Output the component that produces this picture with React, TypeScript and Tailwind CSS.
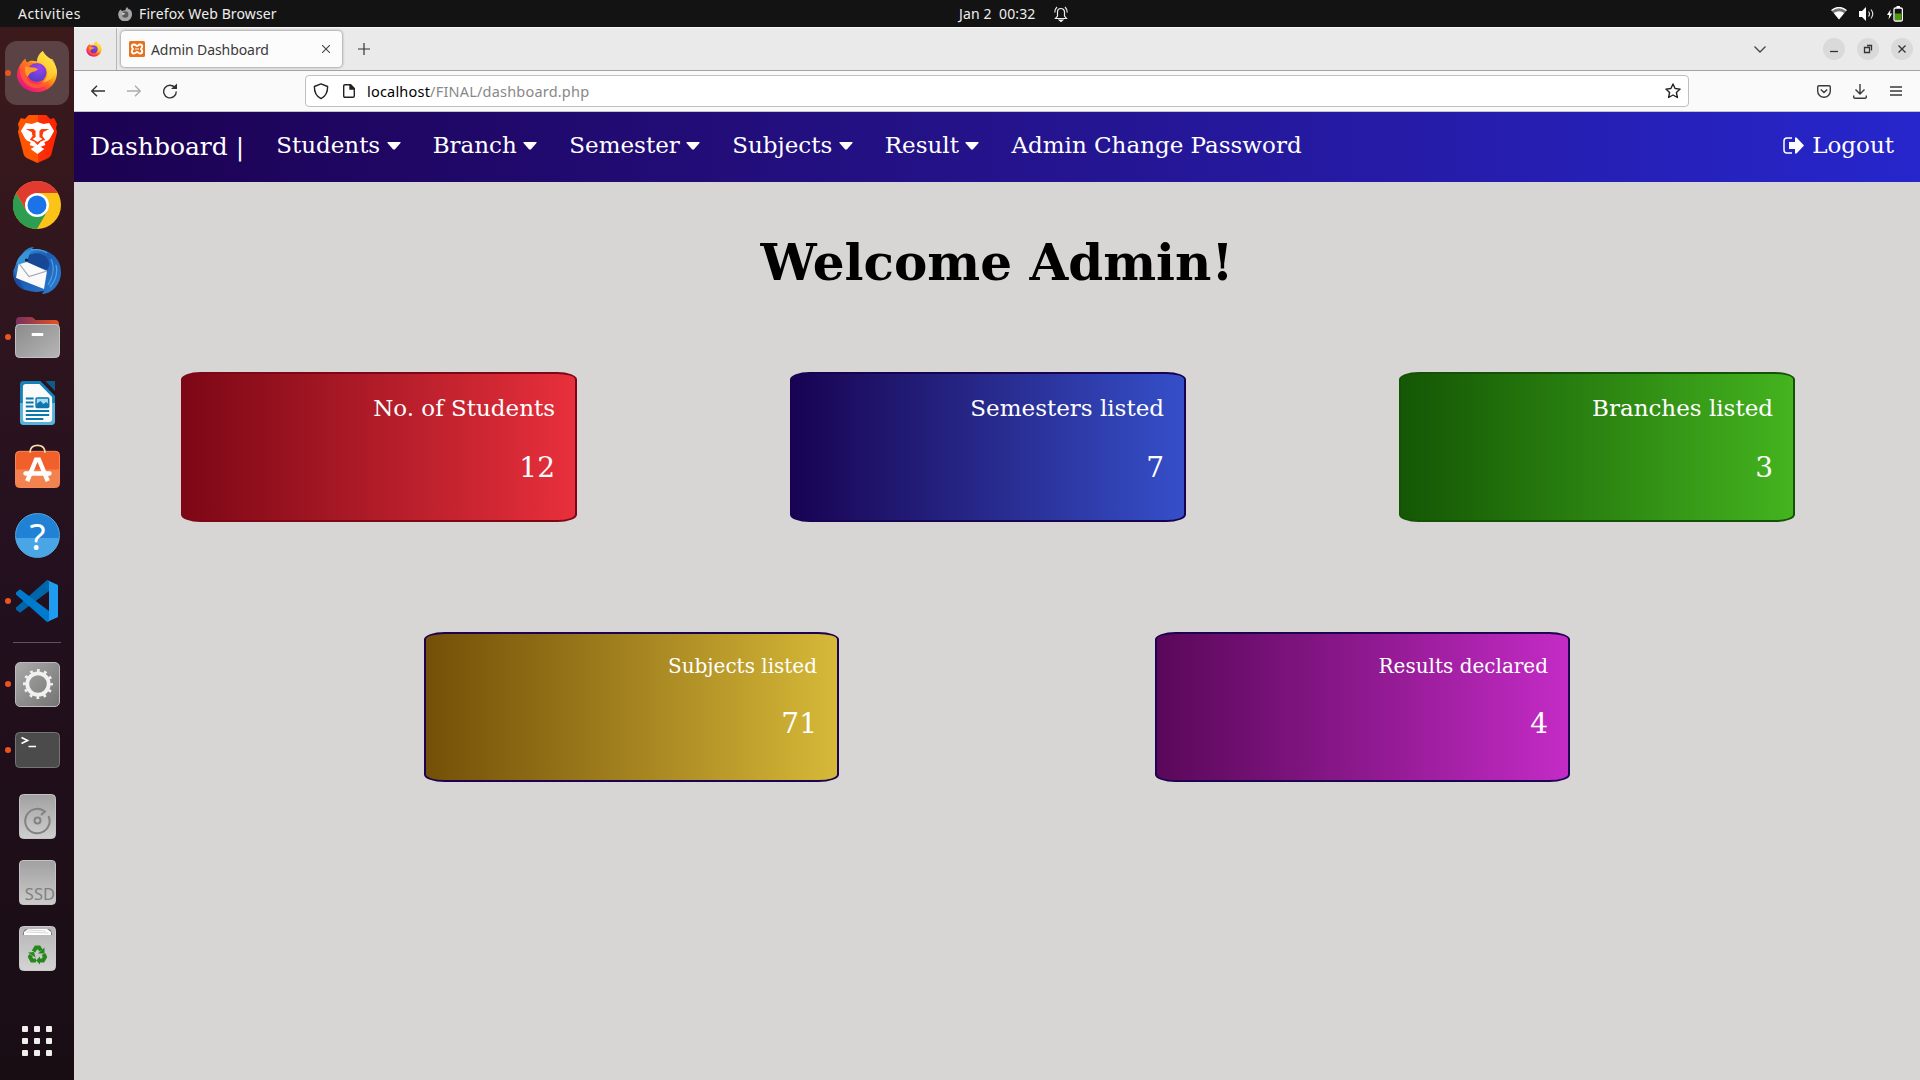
import React from "react";

type CardData = { label: string; value: string; tone: string };

const topCards: CardData[] = [
  { label: "No. of Students", value: "12", tone: "border-[#7d0716] from-[#7d0716] to-[#e8303c]" },
  { label: "Semesters listed", value: "7", tone: "border-[#180353] from-[#180353] to-[#354fc9]" },
  { label: "Branches listed", value: "3", tone: "border-[#145205] from-[#145705] to-[#44b41f]" },
];

const bottomCards: CardData[] = [
  { label: "Subjects listed", value: "71", tone: "from-[#735007] to-[#d6b938]" },
  { label: "Results declared", value: "4", tone: "from-[#5a085a] to-[#c42bc6]" },
];

function Dock() {
  const items: { icon: React.ReactNode; dot?: boolean; active?: boolean }[] = [
    { icon: <FirefoxIcon id="dock" className="mb-[2px] h-[44px] w-[42px]" />, dot: true, active: true },
    { icon: <BraveIcon /> },
    { icon: <ChromeIcon /> },
    { icon: <ThunderbirdIcon /> },
    { icon: <FilesIcon />, dot: true },
    { icon: <WriterIcon /> },
    { icon: <SoftwareIcon /> },
    { icon: <HelpIcon /> },
    { icon: <CodeIcon />, dot: true },
  ];
  const lower: { icon: React.ReactNode; dot?: boolean }[] = [
    { icon: <SettingsIcon />, dot: true },
    { icon: <TerminalIcon />, dot: true },
    { icon: <DiskIcon /> },
    { icon: <SsdIcon /> },
    { icon: <TrashIcon /> },
  ];
  return (
    <aside className="flex w-[74px] shrink-0 flex-col items-center bg-linear-to-b from-[#3c1a1b] via-[#24101f] via-50% to-[#190d14] pt-[14px]">
      {items.map((it, i) => (
        <DockItem key={i} {...it} />
      ))}
      <div className="mt-[7px] mb-[9px] h-px w-12 shrink-0 bg-[#61525f]" />
      {lower.map((it, i) => (
        <DockItem key={i} {...it} />
      ))}
      <div className="mt-[44px] grid grid-cols-3 gap-[6px]">
        {Array.from({ length: 9 }, (_, i) => (
          <span key={i} className="size-[6px] rounded-[1px] bg-[#f1efee]" />
        ))}
      </div>
    </aside>
  );
}

function DockItem({ icon, dot, active }: { icon: React.ReactNode; dot?: boolean; active?: boolean }) {
  return (
    <div className="flex h-[66px] w-[74px] shrink-0 items-start pl-[5px]">
      <div className={`relative flex size-16 items-center justify-center rounded-xl ${active ? "bg-[#5b4244]" : ""}`}>
        {dot && <span className="absolute top-[29px] left-0 size-[6px] rounded-full bg-[#e95420]" />}
        {icon}
      </div>
    </div>
  );
}

function FirefoxIcon({ id, className }: { id: string; className: string }) {
  return (
    <svg viewBox="0 0 44 44" className={className}>
      <defs>
        <linearGradient id={`${id}-a`} x1="0.85" y1="0.1" x2="0.2" y2="0.95">
          <stop offset="0.1" stopColor="#fff44f" />
          <stop offset="0.45" stopColor="#ff980e" />
          <stop offset="0.7" stopColor="#ff3647" />
          <stop offset="1" stopColor="#e31587" />
        </linearGradient>
        <radialGradient id={`${id}-b`} cx="0.6" cy="0.25" r="0.8">
          <stop offset="0" stopColor="#a040f0" />
          <stop offset="1" stopColor="#4a3fc4" />
        </radialGradient>
      </defs>
      <path d="M28 0c-4 3-6 7-6 11-4-1-7-1-10 1-2-1-2-3-2-4-2 1-4 4-5 6-3 4-4 8-4 12 1 10 10 17 21 17 12 0 21-9 21-21 0-4-2-8-5-12 0-1-1-2-2-2-3-2-6-4-8-8z" fill={`url(#${id}-a)`} />
      <path d="M4 15c2-3 4-5 6-7 0 2 1 3 2 4 4-1 7 0 10 3l-3 2-6 2-2 6c0 6 5 10 11 10 7 0 12-4 12-10 3 8-4 14-12 14S3 33 4 15z" fill="#ff6a28" opacity="0.65" />
      <circle cx="22" cy="22.500" r="10" fill={`url(#${id}-b)`} />
      <path d="M10 16c4 2 9 0 13 3-3 3-5 2-8 4l-3 4c-3-3-3-8-2-11z" fill="#ff9a24" />
      <path d="M28 0c-4 3-6 7-6 11 6 1 12 6 11 14-1 4-3 6-5 8 7-1 13-6 14-13 0-5-2-9-4-12l-2 1c-3-2-6-5-8-9z" fill="#ffd43b" opacity="0.7" />
    </svg>
  );
}

function BraveIcon() {
  return (
    <svg viewBox="0 0 42 48" preserveAspectRatio="none" className="ml-px h-[48px] w-[41px]">
      <defs>
        <linearGradient id="brave" x1="0" x2="1">
          <stop offset="0.5" stopColor="#ff5500" />
          <stop offset="0.52" stopColor="#fb3209" />
          <stop offset="1" stopColor="#ff2000" />
        </linearGradient>
      </defs>
      <path d="M12 0h18l4 4 4-1 3 6-1 4 1 4-6 23c-1 2-3 3-5 4l-9 4-9-4c-2-1-4-2-5-4L1 17l1-4-1-4 3-6 4 1z" fill="url(#brave)" />
      <path d="M9 8l6 1 6-2 6 2 6-1 5 8-4 7c-1 2-3 3-6 4l1 3-8 3-8-3 1-3c-3-1-5-2-6-4l-4-7z" fill="#fff" />
      <path d="M9 14l8 0 2 2v6l-3 2 5 3 5-3-3-2v-6l2-2 8 0-6 3-1 4 3 4c-3 1-5 1-6 3l-2 2-2-2c-1-2-3-2-6-3l3-4-1-4z" fill="#ff3b08" />
      <path d="M21 30l7 4-7 5-7-5z" fill="#fff" />
    </svg>
  );
}

function ChromeIcon() {
  return (
    <svg viewBox="0 0 48 48" className="size-12">
      <circle cx="24" cy="24" r="24" fill="#fcc319" />
      <path d="M24 24L3.2 12A24 24 0 0 1 44.8 12H24z" fill="#e13b2f" />
      <path d="M3.2 12A24 24 0 0 0 24 48L34.4 30 24 24 13.6 30z" fill="#2d9e4f" />
      <path d="M3.2 12L13.6 30 24 12z" fill="#e13b2f" />
      <circle cx="24" cy="24" r="12" fill="#fff" />
      <circle cx="24" cy="24" r="9.5" fill="#1a73e8" />
    </svg>
  );
}

function ThunderbirdIcon() {
  return (
    <svg viewBox="0 0 48 48" className="size-12">
      <defs>
        <linearGradient id="bird" x1="0" y1="0" x2="1" y2="1">
          <stop offset="0" stopColor="#3aa0e0" />
          <stop offset="0.45" stopColor="#1d5cb4" />
          <stop offset="1" stopColor="#2f80d2" />
        </linearGradient>
      </defs>
      <path d="M4 17C8 6 14 0 21 0l-2 2c16-1 29 8 29 23 0 13-10 22-19 22l2-3-7 1c-4 0-7-1-12-2C5 41 0 34 0 25l3-8z" fill="url(#bird)" />
      <path d="M16 8c9-4 16-1 19 5 2 4 1 7-1 10l-14-5-9-3c1-3 2-5 5-7z" fill="#184796" />
      <path d="M6 15l8 0 20 9-3 18L3 31z" fill="#fafafa" />
      <path d="M6 16.500l10 13 18-5.500" fill="none" stroke="#a4a7b0" strokeWidth="1.200" />
      <path d="M3 17C5 9 11 4 20 3c-5 3-4 8-6 12l-7 2z" fill="#3a94d9" />
      <path d="M0 22C0 34 5 41 12 43c-3-3-5-6-5-10l-4-2z" fill="#1c4da0" />
      <circle cx="13.500" cy="13" r="1.600" fill="#123" />
      <path d="M38 12c4 8 2 18-3 26M43 18c2 8-1 16-6 22M18 3c6-1 12 0 16 3" fill="none" stroke="#48a5e6" strokeWidth="1.300" />
    </svg>
  );
}

function FilesIcon() {
  return (
    <svg viewBox="0 0 46 42" preserveAspectRatio="none" className="ml-px h-[42px] w-[45px]">
      <defs>
        <linearGradient id="folder"><stop stopColor="#75305c" /><stop offset="1" stopColor="#e85420" /></linearGradient>
        <linearGradient id="drawer" x2="1" y2="1"><stop stopColor="#8b8b8b" /><stop offset="1" stopColor="#b6b6b6" /></linearGradient>
      </defs>
      <path d="M1 5q0-4 4-4h11q3 0 5 3h20q4 0 4 4v14H1z" fill="url(#folder)" />
      <rect x="0.500" y="8.500" width="45" height="33" rx="4" fill="url(#drawer)" stroke="#c3c3c3" />
      <rect x="17" y="17" width="12" height="3" rx="1" fill="#fff" />
    </svg>
  );
}

function WriterIcon() {
  return (
    <svg viewBox="0 0 38 46" preserveAspectRatio="none" className="ml-px h-[46px] w-[37px]">
      <path d="M4 1h18l15 15v25q0 4-4 4H5q-4 0-4-4V5q0-4 3-4z" fill="#1482ba" />
      <path d="M1 23h36v18q0 4-4 4H5q-4 0-4-4z" fill="#55b2dc" />
      <path d="M7 4h14l13 13v22q0 3-3 3H7q-3 0-3-3V7q0-3 3-3z" fill="#fafafa" />
      <path d="M27 1h10v10z" fill="#0f5b8a" />
      <path d="M7 18.500h8M7 22.500h8M7 26.500h8M7 31h24M7 35h24M7 39h18" stroke="#0c76b0" strokeWidth="2" />
      <rect x="17.500" y="18" width="13" height="9.500" rx="1" fill="#a8daf2" stroke="#0c76b0" strokeWidth="1.500" />
      <path d="M18 27v-3l4-3 3 3 3-2 3 3v2z" fill="#0c76b0" />
    </svg>
  );
}

function SoftwareIcon() {
  return (
    <svg viewBox="0 0 46 46" className="mb-[7px] ml-px h-[45px] w-[45px]">
      <rect x="0.500" y="8.500" width="45" height="37" rx="4" fill="#f15f2a" stroke="#f58b5f" />
      <path d="M1 27h44v14q0 4-4 4H5q-4 0-4-4z" fill="#f4824f" />
      <path d="M15.500 10V8q1-5.500 7.500-5.500t7.500 5.500v2" fill="none" stroke="#f8dca6" strokeWidth="1.700" />
      <path d="M12.500 39L21.500 17h3l9 22" fill="none" stroke="#fff" strokeWidth="4.500" />
      <rect x="8.500" y="29" width="29" height="4.500" rx="2.200" fill="#fff" />
    </svg>
  );
}

function HelpIcon() {
  return (
    <div className="ml-px flex size-[45px] items-center justify-center rounded-full border border-[#55a9e2] bg-linear-to-b from-[#2181d5] from-55% to-[#49a5e5] to-55% font-['Noto_Sans',sans-serif] text-[37px] leading-none text-white">
      ?
    </div>
  );
}

function CodeIcon() {
  return (
    <svg viewBox="0 0 42 42" className="size-[42px]">
      <path d="M0 27.500q-1 1 0 2l3 2.500q1 1 2 0L33 11V1L31 0z" fill="#0065a9" />
      <path d="M0 14.500q-1-1 0-2l3-2.500q1-1 2 0L33 31v10l-2 1z" fill="#007acc" />
      <path d="M31 0l11 5v32l-11 5q2-1 2-3V3q0-2-2-3z" fill="#1f9cf0" />
    </svg>
  );
}

function SettingsIcon() {
  return (
    <div className="ml-px flex size-[45px] items-center justify-center rounded-[5px] border border-[#bbb] bg-linear-to-br from-[#aaa] to-[#747474]">
      <svg viewBox="0 0 30 30" className="size-[30px]">
        <circle cx="15" cy="15" r="13.500" fill="none" stroke="#f3f1ef" strokeWidth="3" strokeDasharray="2.800 4.269" strokeDashoffset="1.400" />
        <circle cx="15" cy="15" r="10.700" fill="none" stroke="#f3f1ef" strokeWidth="3.800" />
      </svg>
    </div>
  );
}

function TerminalIcon() {
  return (
    <svg viewBox="0 0 45 36" className="ml-px h-[36px] w-[45px]">
      <rect x="0.500" y="0.500" width="44" height="35" rx="4" fill="#4b4b4b" stroke="#757575" />
      <path d="M6.500 5.500l6 3-6 3M13.500 14.500h7.500" fill="none" stroke="#fff" strokeWidth="1.700" />
    </svg>
  );
}

function DiskIcon() {
  return (
    <svg viewBox="0 0 37 45" className="ml-px h-[45px] w-[37px]">
      <defs><linearGradient id="disk" x2="0" y2="1"><stop stopColor="#a1a1a1" /><stop offset="1" stopColor="#cfcfcf" /></linearGradient></defs>
      <rect x="0.500" y="0.500" width="36" height="44" rx="4" fill="url(#disk)" stroke="#c3c3c3" />
      <path d="M29.500 22A12.200 12.200 0 1 1 26 17.500L22 21" fill="none" stroke="#828282" strokeWidth="2" />
      <circle cx="18.500" cy="26.500" r="3" fill="none" stroke="#828282" strokeWidth="2" />
    </svg>
  );
}

function SsdIcon() {
  return (
    <div className="ml-px flex h-[45px] w-[37px] items-end justify-end rounded-[4px] border border-[#c3c3c3] bg-linear-to-b from-[#a1a1a1] to-[#cbcbcb] font-['Noto_Sans',sans-serif] text-[16.500px] leading-[20px] text-[#808080]">
      SSD
    </div>
  );
}

function TrashIcon() {
  return (
    <svg viewBox="0 0 37 45" className="ml-px h-[45px] w-[37px]">
      <defs><linearGradient id="trash" x2="0" y2="1"><stop stopColor="#b5b5b5" /><stop offset="1" stopColor="#d4d4d4" /></linearGradient></defs>
      <rect x="0.500" y="0.500" width="36" height="44" rx="4" fill="url(#trash)" stroke="#c9c9c9" />
      <path d="M4 9q0-6 4-6h21q4 0 4 6z" fill="#777" />
      <path d="M5 9V6l4-3h19l4 3v3z" fill="#fff" />
      <path d="M7 6l22 1M9 4l18 1" stroke="#ccc" strokeWidth="0.800" />
      <g fill="none" stroke="#26881b" strokeWidth="4">
        <path d="M14.500 25.500L17 21.500h3l2 3" />
        <path d="M24.500 28l1.500 3-2 3.500h-3" />
        <path d="M17 34.500h-4L11 31l1-2" />
      </g>
      <path d="M25.500 21.500v6h-6.500zM21 30.500v8l-4-4zM9 26.500l6-.5 1.500 5.500z" fill="#26881b" />
    </svg>
  );
}

function BellIcon() {
  return (
    <svg viewBox="0 0 14 16" className="h-4 w-3.5" fill="none" stroke="#eee" strokeWidth="1.200">
      <path d="M1.500 12.500h11l-2-2.500V6a3.500 3.500 0 0 0-7 0v4zM3 1Q.8 3 .8 6.500M11 1q2.200 2 2.200 5.500" />
      <path d="M5.300 14h3.400L7 15.500z" fill="#eee" />
    </svg>
  );
}

function TopBar() {
  return (
    <header className="flex h-[27px] shrink-0 items-center bg-[#131313] font-['Noto_Sans',sans-serif] text-[14px] text-[#eee]">
      <span className="ml-[18px] w-[100px] tracking-[0.45px]">Activities</span>
      <svg viewBox="0 0 14 14" className="size-[14px]">
        <path d="M9 0c-1 1-1.500 2-1.500 3L4 4 2.500 2.500C1 4 0 6 .2 8A6.800 6.800 0 0 0 14 7c0-3-1.500-4.500-3.500-5z" fill="#a5a5a5" />
        <circle cx="7.200" cy="7.500" r="3.200" fill="#5a5a5a" />
        <path d="M3.500 5.500l4 1-3 2z" fill="#ccc" />
      </svg>
      <span className="ml-[7px] w-[820px] tracking-[0.12px]">Firefox Web Browser</span>
      <span className="w-[95px] tracking-[0.12px] whitespace-pre">Jan 2  00:32</span>
      <BellIcon />
      <div className="ml-auto flex items-center pr-[17px]">
        <svg viewBox="0 0 16 13" className="mr-[12px] h-[13px] w-4">
          <path d="M.3 3.500Q8-2.800 15.700 3.500L8 12.500z" fill="#777" />
          <path d="M2.800 6Q8 2.400 13.200 6L8 12.500z" fill="#fff" />
          <path d="M.5 3.500Q8-2.500 15.500 3.500" stroke="#fff" strokeWidth="1.300" fill="none" />
        </svg>
        <svg viewBox="0 0 16 14" className="mr-[12px] h-3.5 w-4">
          <path d="M0 4h3l4-4v14L3 10H0z" fill="#fff" />
          <path d="M9.500 4.500q2 2.500 0 5M12 2.500q3.500 4.500 0 9" fill="none" stroke="#ddd" strokeWidth="1.200" />
        </svg>
        <svg viewBox="0 0 16 16" className="size-4">
          <path d="M3.500 3.500L0 9h2.200L1.500 13.500 5.200 7.500H3z" fill="#fff" />
          <rect x="7" y="2" width="8.400" height="13" rx="1.500" fill="none" stroke="#fff" strokeWidth="1.300" />
          <rect x="9.500" y="0" width="3.500" height="2" fill="#fff" />
          <rect x="8" y="7.500" width="6.400" height="6.500" fill="#4e9a06" />
        </svg>
      </div>
    </header>
  );
}

function BrowserChrome() {
  return (
    <div className="shrink-0 font-['Noto_Sans',sans-serif]">
      <div className="flex h-[44px] items-center border-t border-b border-t-[#f8f8f8] border-b-[#a3a3a3] bg-[#eaeaea]">
        <div className="flex h-full w-[43px] items-center border-r border-[#b5b5b5] pl-[12px]">
          <FirefoxIcon id="tab" className="mb-px size-4" />
        </div>
        <div className="ml-[4px] flex h-[36px] w-[221px] items-center rounded-[4px] bg-[#fcfcfc] px-2 shadow-[0_0_3px_rgba(0,0,0,0.55)]">
          <svg viewBox="0 0 16 16" className="size-4">
            <rect width="16" height="16" rx="1.500" fill="#e9711c" />
            <path d="M5 3.500c1.700 0 2 1.500 3 1.500s1.300-1.500 3-1.500 2.200 1.200 2.200 2.300S12 7.500 12 8s1.200 1 1.200 2.200-.6 2.300-2.200 2.300-2-1.500-3-1.500-1.300 1.500-3 1.500-2.200-1.200-2.200-2.300S4 8.500 4 8s-1.200-1.100-1.200-2.200S3.400 3.500 5 3.500z" fill="none" stroke="#fff" strokeWidth="1.900" />
            <path d="M6 8h4" stroke="#fff" strokeWidth="1" />
          </svg>
          <span className="ml-[6px] text-[14px] tracking-[-0.08px] text-[#3a3a3a]">Admin Dashboard</span>
          <svg viewBox="0 0 8 8" className="mr-1 ml-auto size-2" stroke="#444" strokeWidth="1.100"><path d="M0 0l8 8M8 0L0 8" /></svg>
        </div>
        <svg viewBox="0 0 12 12" className="ml-[16px] size-3" stroke="#333" strokeWidth="1.200"><path d="M6 0v12M0 6h12" /></svg>
        <svg viewBox="0 0 12 7" className="ml-auto h-[7px] w-3" fill="none" stroke="#444" strokeWidth="1.300"><path d="M.5.5L6 6 11.500.5" /></svg>
        <div className="ml-[57px] flex gap-[12px] pr-[7px]">
          {["M7 13.500h8", "M7.500 9.500h5v5h-5zM10 7.500h4.500v5", "M7.500 7.500l7 7M14.500 7.500l-7 7"].map((d) => (
            <span key={d} className="flex size-[22px] items-center justify-center rounded-full bg-[#dadada]">
              <svg viewBox="0 0 22 22" className="size-[22px]" fill="none" stroke="#333" strokeWidth="1.300"><path d={d} /></svg>
            </span>
          ))}
        </div>
      </div>
      <div className="flex h-[41px] items-center border-b border-[#c4c4c4] bg-[#fafafa] pl-[17px]">
        <svg viewBox="0 0 14 12" className="h-3 w-3.5" fill="none" stroke="#333" strokeWidth="1.400"><path d="M14 6H1M6 .7L.8 6 6 11.300" /></svg>
        <svg viewBox="0 0 14 12" className="ml-[22px] h-3 w-3.5" fill="none" stroke="#adadad" strokeWidth="1.400"><path d="M0 6h13M8 .7L13.200 6 8 11.300" /></svg>
        <svg viewBox="0 0 16 16" className="ml-[21px] size-4" fill="none" stroke="#333" strokeWidth="1.400"><path d="M13.200 5A6.300 6.300 0 1 0 14.300 8.500" /><path d="M9 6h6V.5z" fill="#333" stroke="none" /></svg>
        <div className="ml-[127px] flex h-8 w-[1384px] items-center rounded-[4px] border border-[#bfbfbf] bg-white pl-[7px]">
          <svg viewBox="0 0 16 18" className="h-[17px] w-4" fill="none" stroke="#222" strokeWidth="1.500"><path d="M8 1L1 3.700Q.8 13 8 16.500 15.200 13 15 3.700z" strokeLinejoin="round" /></svg>
          <svg viewBox="0 0 12 14" className="ml-[14px] h-3.5 w-3" fill="none" stroke="#222" strokeWidth="1.400"><path d="M2 .7h5.500l3.800 3.800v7.500q0 1.300-1.300 1.300H2Q.7 13.300.7 12V2Q.7.7 2 .7z" /><path d="M7 .5V5h4.500z" fill="#222" /></svg>
          <span className="ml-[12px] pt-[2px] text-[14.500px] tracking-[0.2px] text-[#888]"><span className="text-black">localhost</span>/FINAL/dashboard.php</span>
          <svg viewBox="0 0 16 16" className="mr-[7px] ml-auto size-4" fill="none" stroke="#222" strokeWidth="1.400" strokeLinejoin="round"><path d="M8 1l2.100 4.500 5 .6-3.700 3.400 1 5L8 12l-4.400 2.500 1-5L.9 6.100l5-.6z" /></svg>
        </div>
        <div className="ml-auto flex items-center pr-[18px] text-[#3a3a3a]">
          <svg viewBox="0 0 14 13" className="h-[13px] w-3.5" fill="none" stroke="currentColor" strokeWidth="1.400"><path d="M2 .7h10q1.300 0 1.300 1.300v4a6.300 6.300 0 0 1-12.600 0V2Q.7.700 2 .7zM3.800 4.500L7 7.500l3.200-3" /></svg>
          <svg viewBox="0 0 14 15" className="ml-[22px] h-[15px] w-3.5" fill="none" stroke="currentColor" strokeWidth="1.400"><path d="M7 0v9.500M2.500 5.500L7 10l4.500-4.500M.7 11.500v1.500q0 1.300 1.300 1.300h10q1.300 0 1.300-1.300v-1.500" /></svg>
          <svg viewBox="0 0 12 10" className="ml-[23px] h-2.5 w-3" stroke="currentColor" strokeWidth="1.300"><path d="M0 1h12M0 5h12M0 9h12" /></svg>
        </div>
      </div>
    </div>
  );
}

function NavBar() {
  return (
    <nav className="flex h-[70px] shrink-0 items-center bg-linear-to-r from-[#1c0250] to-[#2626cc] pb-[3px] pl-4 pr-[26px] text-[23px] text-white">
      <span className="mr-[32px] pt-[2px] text-[25px]">Dashboard |</span>
      <div className="flex gap-[32px]">
        {["Students", "Branch", "Semester", "Subjects", "Result"].map((t) => (
          <span key={t} className="flex items-center whitespace-nowrap">
            {t}
            <svg viewBox="0 0 14 8" className="ml-[6.500px] h-2 w-3.5">
              <path d="M1 0h12q1 .3.500 1L8 7.300q-1 .9-2 0L.5 1Q0 .300 1 0z" fill="#fff" />
            </svg>
          </span>
        ))}
        <span className="whitespace-nowrap">Admin Change Password</span>
      </div>
      <span className="ml-auto flex items-center gap-[8px]">
        <svg viewBox="0 0 21 17" className="h-[17px] w-[21px]">
          <path d="M9 1H4Q1 1 1 4v9q0 3 3 3h5" fill="none" stroke="#fff" strokeWidth="1.500" />
          <path d="M6 5h6V.5h1.500L21 8.500l-7.500 8H12V12H6z" fill="#fff" />
        </svg>
        Logout
      </span>
    </nav>
  );
}

export default function App() {
  return (
    <div className="flex h-[1080px] w-[1920px] flex-col overflow-hidden">
      <TopBar />
      <div className="flex min-h-0 flex-1">
        <Dock />
        <div className="flex min-w-0 flex-1 flex-col bg-[#d8d6d4]">
          <BrowserChrome />
          <main className="flex flex-1 flex-col font-['DejaVu_Serif',serif]">
            <NavBar />
            <h1 className="mt-[51px] text-center text-[50px] leading-[60px] font-bold text-black">Welcome Admin!</h1>
            <div className="mt-[79px] ml-[107px] flex gap-[213px]">
              {topCards.map((c) => (
                <section key={c.label} className={`flex h-[150px] w-[396px] flex-col items-end rounded-[5%] border-2 bg-linear-to-r pr-[20px] text-white ${c.tone}`}>
                  <p className="mt-[20px] text-[23px] leading-[28px]">{c.label}</p>
                  <p className="mt-[29px] text-[28px] leading-[34px]">{c.value}</p>
                </section>
              ))}
            </div>
            <div className="mt-[110px] ml-[350px] flex gap-[316px]">
              {bottomCards.map((c) => (
                <section key={c.label} className={`flex h-[150px] w-[415px] flex-col items-end rounded-[5%] border-2 border-[#1c0250] bg-linear-to-r pr-[20px] text-white ${c.tone}`}>
                  <p className="mt-[18px] text-[20px] leading-[28px]">{c.label}</p>
                  <p className="mt-[27px] text-[28px] leading-[34px]">{c.value}</p>
                </section>
              ))}
            </div>
          </main>
        </div>
      </div>
    </div>
  );
}
